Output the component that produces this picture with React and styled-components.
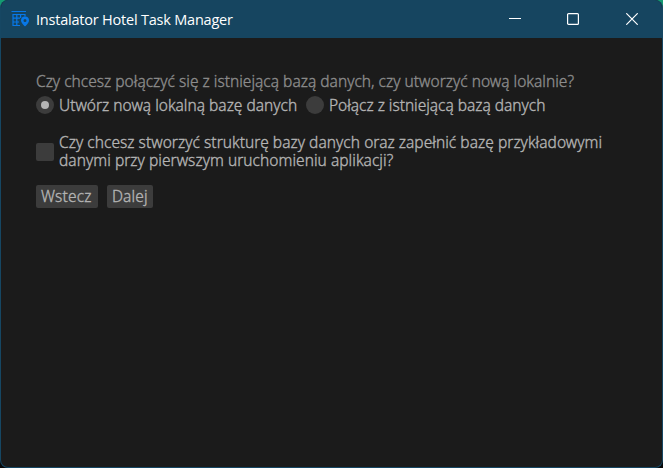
import React from "react";
import styled, { createGlobalStyle } from "styled-components";

const GlobalStyle = createGlobalStyle`
  body { margin: 0; background: #000; overflow: hidden; }
  *, *::before { box-sizing: border-box; }
`;

const Backdrop = styled.div`
  width: 663px;
  height: 468px;
  background: linear-gradient(#149a72 0 20px, #08090a 20px);
`;

const Window = styled.main`
  display: flex;
  flex-direction: column;
  height: 100%;
  overflow: hidden;
  border: 1px solid #164763;
  border-top: 0;
  border-radius: 8px;
  background: #1b1b1b;
  font-family: "Noto Sans", sans-serif;
`;

const TitleBar = styled.header`
  display: flex;
  align-items: center;
  height: 38px;
  flex: none;
  padding: 0 1px 0 10px;
  background: #164560;
  color: #fff;
`;

const Title = styled.h1`
  flex: 1;
  margin: 2px 0 0 7px;
  font: 400 14.5px/20px "Open Sans", sans-serif;
  letter-spacing: -0.21px;
  white-space: nowrap;
`;

const Caption = styled.button`
  display: grid;
  place-items: center;
  width: 58.5px;
  height: 38px;
  padding: 0;
  border: 0;
  background: none;
  color: inherit;
`;

const Content = styled.section`
  display: flex;
  flex-direction: column;
  align-items: flex-start;
  padding: 34px 35px 0;
`;

const Text = styled.span`
  display: block;
  font-size: 15.5px;
  line-height: 18px;
  font-weight: 300;
  letter-spacing: ${(p) => p.$spacing || 0}px;
  color: ${(p) => (p.$muted ? "#8c8c8c" : "#b4b4b4")};
  -webkit-text-stroke: 0.35px currentColor;
  white-space: nowrap;
`;

const Options = styled.div`
  display: flex;
  gap: 9px;
  margin-top: 6px;
`;

const Option = styled.label`
  display: flex;
  align-items: center;
  gap: 5px;
  width: ${(p) => p.$width}px;
`;

const Radio = styled.i`
  display: grid;
  place-items: center;
  flex: none;
  width: 18px;
  height: 18px;
  border-radius: 50%;
  background: #3c3c3c;
  &::before {
    content: "";
    width: 8px;
    height: 8px;
    border-radius: 50%;
    background: ${(p) => (p.$checked ? "#b4b4b4" : "transparent")};
  }
`;

const CheckRow = styled.label`
  display: flex;
  align-items: center;
  gap: 5px;
  margin-top: 19px;
`;

const Checkbox = styled.i`
  flex: none;
  width: 18px;
  height: 18px;
  margin-top: 1px;
  border-radius: 2px;
  background: #3c3c3c;
`;

const Actions = styled.div`
  display: flex;
  gap: 9px;
  margin-top: 16px;
`;

const Button = styled.button`
  width: ${(p) => p.$width}px;
  height: 23px;
  padding: 0 0 1px 5px;
  border: 0;
  border-radius: 2px;
  background: #3c3c3c;
  font-family: inherit;
  text-align: left;
`;

const HotelIcon = () => (
  <svg width="18" height="18" viewBox="0 0 18 18" fill="none" stroke="#0878e8" strokeWidth="1.2">
    <path d="M0.5 1.5H15M2 4.5H14V6.5M2 4V15.5H9M5.8 4.5V15.5M9.6 4.5V8M2 8.2H9M2 12H8" />
    <path fill="#0878e8" stroke="none" fillRule="evenodd" d="M14 6.5a4 4 0 0 0-4 4c0 2.6 4 6 4 6s4-3.4 4-6a4 4 0 0 0-4-4Zm0 2.4a1.5 1.5 0 1 1 0 3 1.5 1.5 0 0 1 0-3Z" />
  </svg>
);

export default function App() {
  return (
    <Backdrop>
      <GlobalStyle />
      <Window>
        <TitleBar>
          <HotelIcon />
          <Title>Instalator Hotel Task Manager</Title>
          <Caption aria-label="Minimalizuj">
            <svg width="12" height="12" stroke="currentColor"><path d="M0 5.5H12" /></svg>
          </Caption>
          <Caption aria-label="Maksymalizuj">
            <svg width="12" height="12" fill="none" stroke="currentColor" strokeWidth="1.2"><rect x=".6" y=".6" width="10.8" height="10.8" rx="1" /></svg>
          </Caption>
          <Caption aria-label="Zamknij">
            <svg width="12" height="12" stroke="currentColor" strokeWidth="1.2"><path d="M.3 .3L11.7 11.7M11.7 .3L.3 11.7" /></svg>
          </Caption>
        </TitleBar>
        <Content>
          <Text $muted $spacing={0.013}>Czy chcesz połączyć się z istniejącą bazą danych, czy utworzyć nową lokalnie?</Text>
          <Options>
            <Option $width={261}>
              <Radio $checked />
              <Text>Utwórz nową lokalną bazę danych</Text>
            </Option>
            <Option $width={240}>
              <Radio />
              <Text $spacing={-0.02}>Połącz z istniejącą bazą danych</Text>
            </Option>
          </Options>
          <CheckRow>
            <Checkbox />
            <Text $spacing={0.04}>
              Czy chcesz stworzyć strukturę bazy danych oraz zapełnić bazę przykładowymi
              <br />
              danymi przy pierwszym uruchomieniu aplikacji?
            </Text>
          </CheckRow>
          <Actions>
            <Button $width={62}><Text $spacing={0.2}>Wstecz</Text></Button>
            <Button $width={46}><Text $spacing={0.1}>Dalej</Text></Button>
          </Actions>
        </Content>
      </Window>
    </Backdrop>
  );
}
